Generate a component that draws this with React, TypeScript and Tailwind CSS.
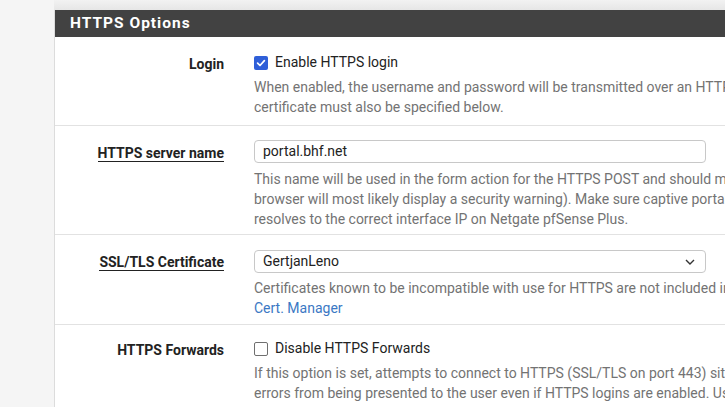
import React from "react";

function Row({
  label,
  underline,
  children,
  last,
  labelPad = "pt-[16px]",
  bodyPad = "pt-[14px] pb-[8px]",
}: {
  label: string;
  underline?: boolean;
  children: React.ReactNode;
  last?: boolean;
  labelPad?: string;
  bodyPad?: string;
}) {
  return (
    <div className={`flex shrink-0 ${last ? "" : "border-b border-[#e2e2e2]"}`}>
      <div className={`w-[184px] shrink-0 pr-[15px] text-right ${labelPad}`}>
        <span
          className={`text-[14px] font-bold leading-[20px] text-[#222] ${
            underline ? "border-b-[1.5px] border-[#222]" : ""
          }`}
        >
          {label}
        </span>
      </div>
      <div className={`flex-1 pl-[15px] ${bodyPad}`}>{children}</div>
    </div>
  );
}

function Help({ lines, gap = "mt-[6px]" }: { lines: React.ReactNode[]; gap?: string }) {
  return (
    <div className={`${gap} text-[14px] leading-[20px] text-[#737373]`}>
      {lines.map((l, i) => (
        <div key={i} className="whitespace-nowrap">
          {l}
        </div>
      ))}
    </div>
  );
}

function Checkbox({ checked }: { checked?: boolean }) {
  return checked ? (
    <span className="flex h-[14px] w-[14px] items-center justify-center rounded-[2px] bg-[#2f5fd8]">
      <svg width="10" height="10" viewBox="0 0 10 10">
        <path
          d="M1.6 5.2 L4 7.5 L8.4 2.6"
          fill="none"
          stroke="white"
          strokeWidth="1.7"
          strokeLinecap="round"
          strokeLinejoin="round"
        />
      </svg>
    </span>
  ) : (
    <span className="h-[14px] w-[14px] rounded-[2px] border border-[#6f6f6f] bg-white" />
  );
}

export default function App() {
  return (
    <div
      className="flex h-[407px] w-[725px] overflow-hidden bg-[#f5f5f5]"
      style={{ fontFamily: "Roboto, 'Liberation Sans', sans-serif" }}
    >
      <div className="w-[54px] shrink-0" />
      <div className="flex w-[900px] shrink-0 flex-col">
        <div className="h-[10px] shrink-0 bg-linear-to-b from-[#f2f2f2] to-[#e6e6e6]" />
        <div className="flex shrink-0 flex-col border-l border-[#dcdcdc] bg-white">
          <div className="flex h-[27px] shrink-0 items-center bg-[#424242] pl-[15px]">
            <span className="text-[15.5px] font-bold tracking-[1px] text-white">
              HTTPS Options
            </span>
          </div>

          <Row label="Login" labelPad="pt-[15px]" bodyPad="pt-[14px] pb-[8px]">
            <div className="flex h-[20px] items-center gap-[7px] pt-[3px]">
              <Checkbox checked />
              <span className="text-[14px] text-[#222]">Enable HTTPS login</span>
            </div>
            <Help
              lines={[
                "When enabled, the username and password will be transmitted over an HTTPS connection to protect against eavesdroppers. A server name and",
                "certificate must also be specified below.",
              ]}
            />
          </Row>

          <Row
            label="HTTPS server name"
            underline
            labelPad="pt-[15px]"
            bodyPad="pt-[14px] pb-[5px]"
          >
            <div className="flex h-[23px] w-[452px] items-center rounded-[4px] border border-[#c8c8c8] px-[8px] text-[14px] text-[#222]">
              portal.bhf.net
            </div>
            <Help
              lines={[
                "This name will be used in the form action for the HTTPS POST and should match the Common Name (CN) in your certificate (otherwise, the client",
                "browser will most likely display a security warning). Make sure captive portal clients can resolve this name in DNS and verify on the client",
                "resolves to the correct interface IP on Netgate pfSense Plus.",
              ]}
            />
          </Row>

          <Row
            label="SSL/TLS Certificate"
            underline
            labelPad="pt-[15px]"
            bodyPad="pt-[15px] pb-[6px]"
          >
            <div className="flex h-[23px] w-[452px] items-center justify-between rounded-[4px] border border-[#c8c8c8] pl-[8px] pr-[10px] text-[14px] text-[#222]">
              <span>GertjanLeno</span>
              <svg width="10" height="6" viewBox="0 0 10 6">
                <path
                  d="M1 1 L5 5 L9 1"
                  fill="none"
                  stroke="#333"
                  strokeWidth="1.4"
                />
              </svg>
            </div>
            <Help
              gap="mt-[5px]"
              lines={[
                "Certificates known to be incompatible with use for HTTPS are not included in this list. If no certificates are defined, one may be defined here:",
                <span className="text-[#3b78c4]">Cert. Manager</span>,
              ]}
            />
          </Row>

          <Row
            label="HTTPS Forwards"
            last
            labelPad="pt-[13px]"
            bodyPad="pt-[12px] pb-[8px]"
          >
            <div className="flex h-[20px] items-center gap-[7px] pt-[3px]">
              <Checkbox />
              <span className="text-[14px] text-[#222]">
                Disable HTTPS Forwards
              </span>
            </div>
            <Help
              lines={[
                "If this option is set, attempts to connect to HTTPS (SSL/TLS on port 443) sites will not be forwarded to the captive portal. This prevents certificate",
                "errors from being presented to the user even if HTTPS logins are enabled. Users must attempt a connection to an HTTP (Port 80) site to get",
              ]}
            />
          </Row>
        </div>
      </div>
    </div>
  );
}
